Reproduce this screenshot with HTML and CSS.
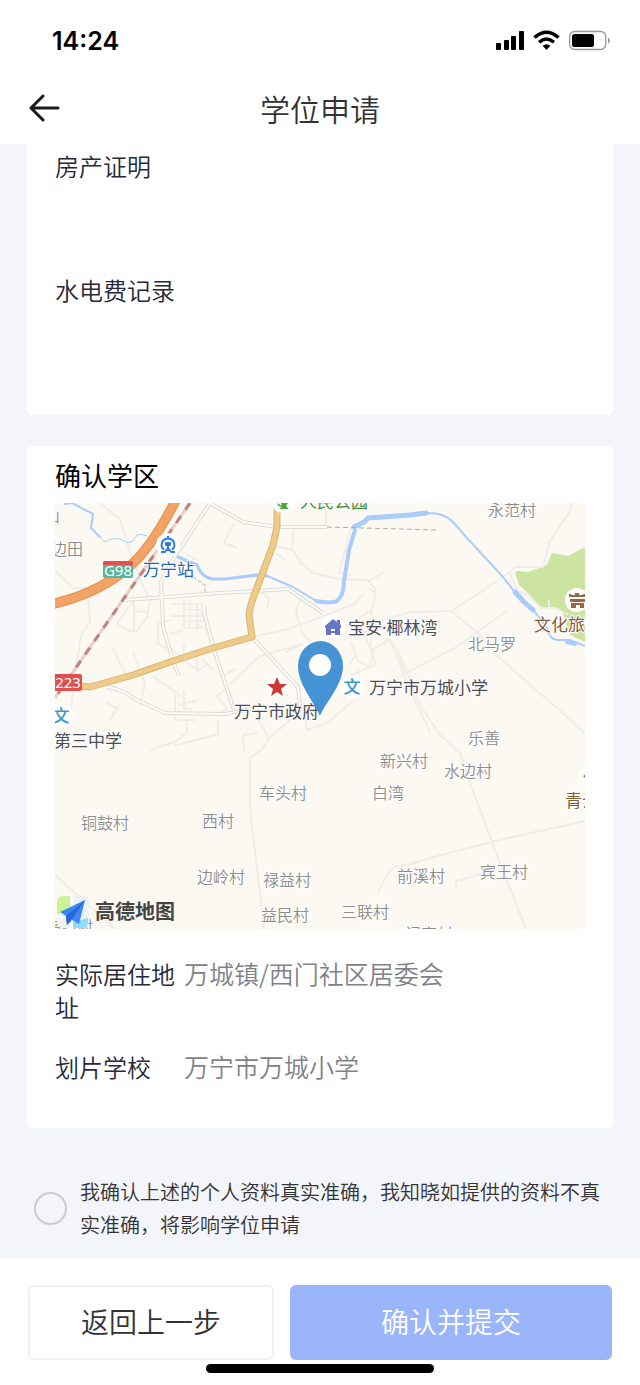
FILE: index.html
```html
<!doctype html>
<html lang="zh-CN">
<head>
  <meta charset="UTF-8">
  <meta name="viewport" content="width=device-width, initial-scale=1">
  <title>学位申请</title>
  <link rel="stylesheet" href="styles.css">
</head>
<body>
  <div class="status">
    <span class="time">14:24</span>
    <svg class="status-icons" width="114" height="22" viewBox="496 30 114 22">
      <rect x="496" y="43" width="5" height="7" rx="1"/>
      <rect x="504" y="40" width="5" height="10" rx="1"/>
      <rect x="511" y="36" width="5" height="14" rx="1"/>
      <rect x="519" y="31" width="5" height="19" rx="1"/>
      <path d="M534.500 37.500Q546.500 27 558.500 37.500" fill="none" stroke="#000" stroke-width="3.600"/>
      <path d="M539 42.200Q546.500 35.800 554 42.200" fill="none" stroke="#000" stroke-width="3.400"/>
      <path d="M542.600 45.800Q546.500 42.600 550.400 45.800L546.500 50Z"/>
      <rect x="569.700" y="31.500" width="36" height="18" rx="5" fill="none" stroke="#999" stroke-width="1.300"/>
      <rect x="572" y="34" width="22" height="13" rx="2.500"/>
      <path d="M608 37.500q2 .8 2 3t-2 3z" fill="#999"/>
    </svg>
  </div>

  <header class="header">
    <button class="back" type="button" aria-label="返回">
      <svg width="32" height="28" viewBox="0 0 32 28" fill="none" stroke="#1b1b1b" stroke-width="3" stroke-linecap="round" stroke-linejoin="round">
        <path d="M30 14H3M15 2L3 14l12 12"/>
      </svg>
    </button>
    <h1>学位申请</h1>
  </header>

  <main class="content">
    <section class="card proof">
      <div class="item">房产证明</div>
      <div class="item">水电费记录</div>
    </section>

    <section class="card area">
      <h2>确认学区</h2>
      <svg class="map" viewBox="55 503 530 426" role="img" aria-label="学区地图">
        <rect x="55" y="503" width="530" height="426" fill="#fcf9f2"/>
        <path class="park" d="M515 573L517 571L528 572L547 565L552 553L568 556L585 547V642L570 635L563 613L556 608L541 607L532 597L519 585Z"/>

        <!-- 小路 -->
        <g class="lane">
          <path d="M99 503l21 16 9 30 12 32 8 17M55 571l18 17 18 0M88 598l2 24-9 13-6 40-5 45"/>
          <path d="M134 600l-17 23 12 8h8l10-14 3-17M134 600v30M135 611l11 1M170 620l-12 4v20l8 4M171 634l12-4"/>
          <path d="M172 604h30v12h-30M184 600v28h22M190 600v30M184 621h20M197 603v28M183 610h20M206 607v22l-10-5"/>
          <path d="M112 647l15 30M133 652l12 32-5 22M153 676l28 20M106 703l12 6-8 11M184 643v14M197 651v20l9-6M203 660l10 10M175 690v30h20M184 691v18h8M178 705l20-5M225 690l-8 6 10 12-6 6M165 643l30 26"/>
          <path d="M234 523l-10 20 13 5M276 546l16 4 1-20M293 550l8 13 12 10 26 6 29 1 8 10-4 20-13 8M368 582l16-10M368 588l9 5M350 576l-11-3 12-45M326 503v23M276 553l9 7M257 590l12 8-2 10M301 599l-5 10 2 10 5 15 7 7"/>
          <path d="M252 637l36-8 36-13 30-12 10-10M230 684l30-28 43-12M220 677l16-8M350 641l8 20 12 6 4-18 14-10 10 12 8 30M371 610v45M355 655l-6 10M300 645l-14 7"/>
          <path d="M361 625l10 26 5 14-25 10M390 640l20 50 20 42M390 640l-20 11M374 629l-30 10"/>
          <path d="M345 626l37-6 30-8 39-1 27-17 32-22 5-5h28l7-26 20-30 3-17M452 612l25 20 20 24 68 59 20 19M400 676l55-28 53-38M510 573l7 17 12 6 12 12h15l12 7"/>
          <path d="M549 600v8"/>
          <path d="M400 655l20 50 20 30 20 18 10 30 30 80 26 66M400 866l95-25 90-20M378 893q8-20 17-26l25-5M456 889v-8l40-11"/>
          <path d="M305 710l2 20 20-7 30-25M257 717l12 22-7 10-12 9v50l14 121M269 739l26-24M257 733l-14 2 1 17"/>
          <path d="M187 722v10l-12 10-25 8M218 720v14l-45 12M120 703l-10 15M55 875l60 54M180 575l15-14M187 555l12 6"/>
        </g>
        <path class="faint-dash" d="M193 577l12 8v9M285 503l-3 10"/>

        <!-- 城区道路 -->
        <g class="street-edge">
          <path d="M210 503l-36 55-13 24 2 45 10 34 6 15M125 600l95-7 68-4 35 24M210 503l33 19 34 5h50"/>
          <path d="M204 612l10 38 20 60M252 637l46 50 2 20M107 687q15 2 28 12l30 14 60 1 30-6"/>
        </g>
        <g class="street">
          <path d="M210 503l-36 55-13 24 2 45 10 34 6 15M125 600l95-7 68-4 35 24M210 503l33 19 34 5h50"/>
          <path d="M204 612l10 38 20 60M252 637l46 50 2 20M107 687q15 2 28 12l30 14 60 1 30-6"/>
        </g>

        <!-- 河流 -->
        <g class="river">
          <path d="M65 504l7-1 21 11-2 14 9 9" stroke-width="2"/>
          <path d="M100 537l5 5q11-6 17-2 8 6 13-2 2-6 12-2" stroke-width="1"/>
          <path d="M178 557l19 8q5 13 16 14l12 0 32-4 10 1" stroke-width="3"/>
          <path d="M265 575l28 12 25 15" stroke-width="2"/>
          <path d="M316 601q15 3 21 0 7-6 7-20l5-31 6-20" stroke-width="4"/>
          <path d="M354 527l10-5 4-4 42-3 16-2" stroke-width="5"/>
          <path d="M424 513q20-1 29 9l14 16 36 39 14 18" stroke-width="2"/>
          <path d="M515 592l9 10 9 8" stroke-width="5"/>
          <path d="M532 608l15 20q3 12 10 12l13 0 15 6" stroke-width="2"/>
          <path d="M567 642l8 2" stroke-width="4"/>
        </g>
        <path class="border-line" d="M327 527l109 3"/>

        <!-- 主干道 -->
        <path class="main-edge" d="M277 503v24l-4 18-15 40q-9 23-9 30l3 22-39 11-40 13-40 14-43 12-10-1"/>
        <path class="main-road" d="M277 503v24l-4 18-15 40q-9 23-9 30l3 22-39 11-40 13-40 14-43 12-10-1"/>
        <path class="highway-edge" d="M176 500q-25 48-45 65-29 27-78 39"/>
        <path class="highway" d="M176 500q-25 48-45 65-29 27-78 39"/>
        <path class="rail" d="M190 503L55 698"/>
        <path class="rail-dash" d="M190 503L55 698"/>

        <!-- 道路编号 -->
        <rect x="103" y="561" width="30" height="17" rx="2" fill="#54b69a"/>
        <path d="M103 565v-2q0-2 2-2h26q2 0 2 2v2z" fill="#e0504c"/>
        <text class="road-no" x="118" y="576">G98</text>
        <rect x="53" y="674" width="29" height="17" rx="2" fill="#e0504c"/>
        <text class="road-no" x="68" y="688">223</text>

        <!-- 地点图标 -->
        <g fill="#fff">
          <circle cx="168" cy="545" r="12"/>
          <circle cx="283" cy="501" r="12"/>
          <circle cx="333" cy="627" r="12"/>
          <circle cx="277" cy="687" r="12"/>
          <circle cx="352" cy="687" r="12"/>
          <circle cx="61" cy="716" r="12"/>
          <circle cx="577" cy="600" r="12"/>
          <circle cx="590" cy="776" r="11"/>
        </g>
        <g fill="none" stroke="#2b7fd8" stroke-width="2">
          <path d="M164 550a6.500 6.500 0 1 1 8 0M168 536v3M161 552h4l3-4 3 4h4M168 546v5"/>
          <path d="M166 543h4v2h-4z"/>
        </g>
        <path d="M277 503l5 3-1-3h7l-2 3 3 3h-10l3-2q-4 0-5-4z" fill="#4aa53a"/>
        <path fill-rule="evenodd" d="M333 619l4 3v-2h3v4l1 2v2h-1v7h-14v-7h-1v-2zM331 629v2h4v-2zM331 633v2h4v-2z" fill="#6775c2"/>
        <path d="M277 677l3 7h7l-6 5 2 7-6-4-6 4 2-7-6-5h7z" fill="#cc3a34"/>
        <path d="M569 597v-3h2v1h4v-2h4v2h4v-1h2v3zM570 599h15v3h-15zM571 603h13v5h-4v-3h-4v3h-5z" fill="#98693f"/>
        <path d="M583 776l3-2v5z" fill="#98693f"/>
        <text class="school" x="352" y="693">文</text>
        <text class="school" x="61" y="722">文</text>

        <g class="village">
          <text x="488" y="516">永范村</text>
          <text x="468" y="650">北马罗</text>
          <text x="51" y="555">边田</text>
          <text x="44" y="522">山</text>
          <text x="468" y="744">乐善</text>
          <text x="380" y="767">新兴村</text>
          <text x="444" y="777">水边村</text>
          <text x="259" y="799">车头村</text>
          <text x="372" y="799">白湾</text>
          <text x="81" y="829">铜鼓村</text>
          <text x="202" y="827">西村</text>
          <text x="197" y="883">边岭村</text>
          <text x="263" y="886">禄益村</text>
          <text x="397" y="882">前溪村</text>
          <text x="480" y="878">宾王村</text>
          <text x="261" y="921">益民村</text>
          <text x="341" y="918">三联村</text>
          <text x="405" y="940">记家村</text>
          <text x="45" y="933">乌石村</text>
        </g>
        <g class="place">
          <text x="348" y="634">宝安·椰林湾</text>
          <text x="369" y="694">万宁市万城小学</text>
          <text x="234" y="718">万宁市政府</text>
          <text x="54" y="747">第三中学</text>
          <text x="143" y="576" fill="#2a66b0">万宁站</text>
          <text x="300" y="508" fill="#3d8e36">人民公园</text>
          <text x="534" y="631" fill="#875a35">文化旅游</text>
          <text x="565" y="807" fill="#875a35">青云</text>
        </g>

        <!-- 当前位置 -->
        <path d="M320 716c-5-13-22-31-22-50a22.500 25 0 0 1 45 0c0 19-18 37-23 50z" fill="#4593d5"/>
        <circle cx="320" cy="665" r="11" fill="#fff"/>

        <!-- 高德地图 -->
        <rect x="57" y="896" width="32" height="32" rx="6" fill="#edf2f2"/>
        <path d="M57 915v-13q0-6 6-6h7v12z" fill="#caf595"/>
        <path d="M73 928v-6l15-4v4q0 6-6 6z" fill="#8ddcff"/>
        <path d="M72 896v12M72 920v8M57 917h6" stroke="#fff" stroke-width="2"/>
        <path d="M60 912l25-12-6 24-7-4-5 5-1-9z" fill="#3e85f7"/>
        <path d="M85 900l-19 16 1 9 5-6z" fill="#2467dc"/>
        <text class="map-brand" x="95" y="919">高德地图</text>
      </svg>

      <dl class="info">
        <dt>实际居住地址</dt>
        <dd>万城镇/西门社区居委会</dd>
        <dt>划片学校</dt>
        <dd>万宁市万城小学</dd>
      </dl>
    </section>

    <label class="agree">
      <input type="checkbox">
      <span>我确认上述的个人资料真实准确，我知晓如提供的资料不真实准确，将影响学位申请</span>
    </label>
  </main>

  <footer class="footer">
    <div class="btns">
      <button class="btn prev" type="button">返回上一步</button>
      <button class="btn submit" type="button">确认并提交</button>
    </div>
    <div class="home-bar"></div>
  </footer>
</body>
</html>
```
FILE: styles.css
```css
*{margin:0;
  padding:0;
  box-sizing:border-box;}
body{background:#fff;
     color:#252a36;
     font-family:"Noto Sans CJK SC", sans-serif;
     font-size:24px;
     font-weight:350;
     line-height:33px;}
button{font-family:inherit;
       font-weight:inherit;
       cursor:pointer;}

/* 状态栏 */
.status{display:flex;
        justify-content:space-between;
        align-items:center;
        height:72px;
        padding:10px 30px 0 52px;}
.time{color:#000;
      font-family:Inter, sans-serif;
      font-size:25px;
      font-weight:600;}

/* 标题栏 */
.header{display:grid;
        grid-template-columns:32px 1fr 32px;
        align-items:center;
        height:72px;
        padding:0 28px;}
.header h1{color:#333;
           font-size:30px;
           font-weight:350;
           text-align:center;}
.back{display:flex;
      border:0;
      background:none;}

.content{background:#f4f5fa;}
.card{margin:0 27px;
      padding:0 28px;
      background:#fff;
      border-radius:6px;}
.proof{padding-top:5px;
       padding-bottom:18px;
       border-radius:0 0 6px 6px;}
.item{min-height:124px;}
.area{margin-top:31px;
      padding-top:11px;
      padding-bottom:45px;}
.area h2{margin-bottom:11px;
         color:#000;
         font-size:26px;
         font-weight:400;
         line-height:35px;}

/* 地图 */
.map{display:block;
     width:100%;
     height:auto;}
.map path{stroke-linejoin:round;}
.park{fill:#cce3a2;}
.lane{fill:none;
      stroke:#efede8;
      stroke-width:2;}
.street-edge{fill:none;
             stroke:#dddbd5;
             stroke-width:4;}
.street{fill:none;
        stroke:#fdfcf8;
        stroke-width:2;}
.river{fill:none;
       stroke:#a9ccfb;
       stroke-linecap:round;}
.faint-dash{fill:none;
            stroke:#b5b5b5;
            stroke-dasharray:4 2;}
.border-line{fill:none;
             stroke:#aaa;
             stroke-dasharray:5 3;}
.main-edge{fill:none;
           stroke:#d9b46d;
           stroke-width:7;}
.main-road{fill:none;
           stroke:#eecb8a;
           stroke-width:5;}
.highway-edge{fill:none;
              stroke:#e58d4c;
              stroke-width:10;}
.highway{fill:none;
         stroke:#f2a365;
         stroke-width:8;}
.rail{fill:none;
      stroke:#e5cfcb;
      stroke-width:3;}
.rail-dash{fill:none;
           stroke:#c5807e;
           stroke-width:3;
           stroke-dasharray:8 8;}
.road-no{fill:#fff;
         font-family:"Noto Sans", sans-serif;
         font-size:15px;
         font-weight:400;
         text-anchor:middle;}
.school{fill:#3a97c9;
        font-size:17px;
        font-weight:500;
        text-anchor:middle;}
.village{fill:#8c8c8c;
         font-size:16px;}
.place{fill:#4c4e57;
       font-family:"Noto Sans", "Noto Sans CJK SC", sans-serif;
       font-size:17px;
       font-weight:400;}
.village text,
.place text{stroke:#fff;
            stroke-width:2px;
            paint-order:stroke;}
.map-brand{fill:#444;
           font-size:20px;
           font-weight:700;}

.info{display:grid;
      grid-template-columns:125px 1fr;
      gap:27px 4px;
      margin-top:28px;}
.info dd{color:#808288;
         font-size:25px;}

.agree{display:flex;
       align-items:center;
       gap:13px;
       padding:47px 28px 17px 34px;
       color:#333;
       font-size:20px;}
.agree input{flex:none;
             width:33px;
             height:33px;
             border:2px solid #ccc;
             border-radius:50%;
             appearance:none;}
.agree input:checked{border-color:#9ab5f9;
                     background:#9ab5f9;}

/* 底部按钮 */
.footer{padding:27px 28px 13px;}
.btns{display:flex;
      gap:16px;}
.btn{height:75px;
     padding-bottom:3px;
     border:0;
     border-radius:6px;
     font-size:28px;}
.prev{flex:242;
      border:2px solid #f1f1f1;
      background:#fff;
      color:#333;}
.submit{flex:322;
        background:#9ab5f9;
        color:#fff;}
.home-bar{width:228px;
          height:9px;
          margin:4px auto 0;
          border-radius:5px;
          background:#000;}
```
